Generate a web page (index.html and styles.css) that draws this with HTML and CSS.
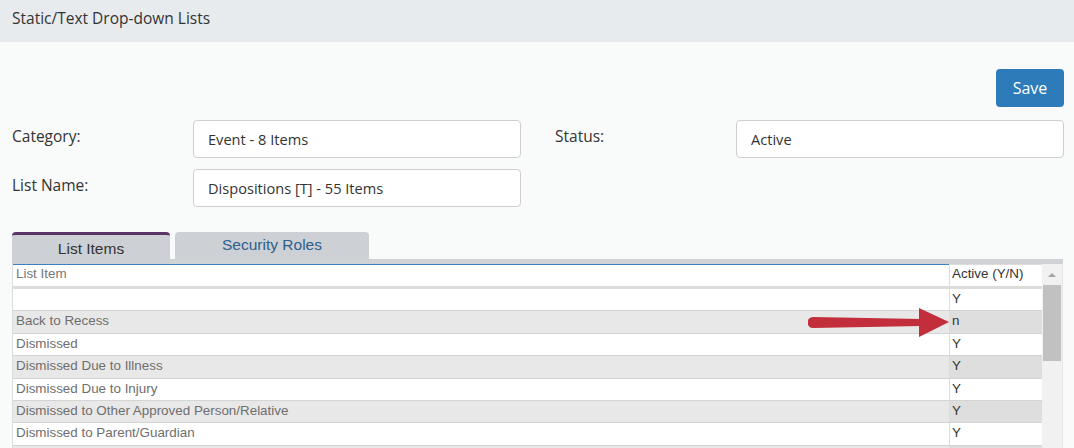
FILE: index.html
```html
<!DOCTYPE html>
<html>
<head>
<meta charset="utf-8">
<link rel="stylesheet" href="styles.css">
</head>
<body>
<div class="header">Static/Text Drop-down Lists</div>
<div class="content">
  <div class="save-row"><button class="btn-save">Save</button></div>
  <div class="form">
    <div class="label">Category:</div>
    <div class="input">Event - 8 Items</div>
    <div class="spacer"></div>
    <div class="label">Status:</div>
    <div class="input">Active</div>
    <div class="label">List Name:</div>
    <div class="input">Dispositions [T] - 55 Items</div>
  </div>
  <div class="tabs">
    <div class="tab active">List Items</div>
    <div class="tab">Security Roles</div>
  </div>
  <div class="table-wrap">
    <div class="strip"></div>
    <div class="table-area">
      <div class="grid">
        <div class="row head">
          <div class="c1">List Item</div>
          <div class="c2">Active (Y/N)</div>
        </div>
        <div class="row"><div class="c1"></div><div class="c2">Y</div></div>
        <div class="row alt"><div class="c1">Back to Recess</div><div class="c2">n</div></div>
        <div class="row"><div class="c1">Dismissed</div><div class="c2">Y</div></div>
        <div class="row alt"><div class="c1">Dismissed Due to Illness</div><div class="c2">Y</div></div>
        <div class="row"><div class="c1">Dismissed Due to Injury</div><div class="c2">Y</div></div>
        <div class="row alt"><div class="c1">Dismissed to Other Approved Person/Relative</div><div class="c2">Y</div></div>
        <div class="row"><div class="c1">Dismissed to Parent/Guardian</div><div class="c2">Y</div></div>
        <div class="row alt"><div class="c1"></div><div class="c2"></div></div>
        <svg class="arrow" width="142" height="30" viewBox="0 0 142 30">
          <path d="M5 9 L113 11 L113 18 L5 20 A5.5 5.5 0 0 1 5 9 Z" fill="#c22e3c"/>
          <path d="M111 0 L141 14 L111 29 Z" fill="#c22e3c"/>
        </svg>
      </div>
      <div class="scrollbar">
        <div class="sb-up"><span class="tri"></span></div>
        <div class="sb-thumb"></div>
      </div>
    </div>
  </div>
</div>
</body>
</html>
```
FILE: styles.css
```css
html, body {
  margin: 0;
  padding: 0;
  overflow: hidden;
  height: 448px;
}
body {
  background: #f9fafa;
  font-family: "Open Sans", "Liberation Sans", sans-serif;
  color: #333;
}
.header {
  height: 42px;
  box-sizing: border-box;
  background: #e8ebee;
  padding: 7px 0 0 12px;
  font-size: 15.5px;
  line-height: 22px;
  color: #333;
}
.content {
  padding: 0 10px 0 12px;
}
.save-row {
  display: flex;
  justify-content: flex-end;
  margin-top: 27px;
  height: 38px;
}
.btn-save {
  width: 68px;
  height: 38px;
  border: none;
  border-radius: 4px;
  background: #2e7bba;
  color: #fff;
  font-family: "Open Sans", sans-serif;
  font-size: 16px;
  padding: 0;
}
.form {
  display: grid;
  grid-template-columns: 181px 328px 34px 181px 328px;
  grid-auto-rows: 38px;
  row-gap: 11px;
  margin-top: 13px;
}
.label {
  font-size: 15.5px;
  line-height: 20px;
  padding-top: 6px;
  color: #333;
}
.input {
  box-sizing: border-box;
  background: #fff;
  border: 1px solid #cfcfcf;
  border-radius: 4px;
  padding: 0 14px;
  font-size: 14.6px;
  line-height: 36px;
  color: #333;
}
.tabs {
  display: flex;
  gap: 5px;
  margin-top: 25px;
  height: 27px;
  font-family: "Liberation Sans", Arial, sans-serif;
  font-size: 15.5px;
}
.tab {
  width: 194px;
  box-sizing: border-box;
  background: #cdd0d4;
  border-radius: 4px 4px 0 0;
  text-align: center;
  line-height: 26px;
  color: #2f5f8e;
}
.tab.active {
  width: 158px;
  height: 32px;
  border-top: 3px solid #5c3568;
  line-height: 28px;
  color: #333;
  position: relative;
  z-index: 1;
}
.table-wrap {
  width: 1051px;
}
.strip {
  height: 5px;
  background: #d0d3d6;
}
.table-area {
  display: flex;
}
.grid {
  position: relative;
  width: 1030px;
  border-left: 1px solid #dcdcdc;
  font-family: "Liberation Sans", Arial, sans-serif;
  font-size: 13.4px;
}
.row {
  display: flex;
  height: 21.4px;
  border-bottom: 1px solid #d4d4d4;
  background: #fff;
  line-height: 20px;
}
.row .c1 {
  width: 936px;
  padding-left: 3px;
  box-sizing: border-box;
  color: #6e6e6e;
}
.row .c2 {
  flex: 1;
  border-left: 1px solid #dcdcdc;
  padding-left: 2px;
  color: #333;
}
.row.alt .c1 {
  background: #e8e8e8;
}
.row.alt .c2 {
  background: #dedede;
}
.row.head {
  height: 22px;
  border-bottom: 3px solid #dcdcdc;
}
.row.head .c1 {
  border-top: 1px solid #3d7fc0;
  color: #777;
  line-height: 18px;
}
.row.head .c2 {
  border-top: 1px solid #dcdcdc;
  line-height: 18px;
}
.arrow {
  position: absolute;
  left: 795px;
  top: 44px;
}
.scrollbar {
  width: 20px;
  background: #f1f1f1;
  border-right: 1px solid #e4e4e4;
  height: 184px;
}
.sb-up {
  height: 21px;
  display: flex;
  align-items: center;
  justify-content: center;
}
.tri {
  width: 0;
  height: 0;
  border-left: 4px solid transparent;
  border-right: 4px solid transparent;
  border-bottom: 4px solid #a3a3a3;
}
.sb-thumb {
  margin: 0 1px 0 1px;
  height: 76px;
  background: #c1c1c1;
}
```
